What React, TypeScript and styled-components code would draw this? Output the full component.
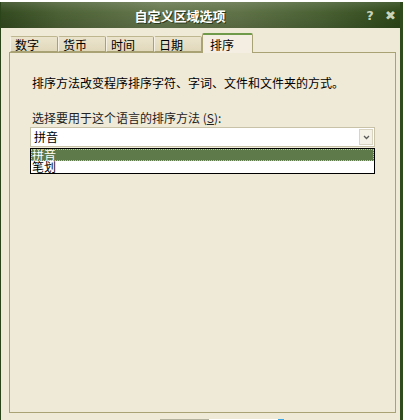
import React from "react"
import styled, { createGlobalStyle } from "styled-components"

const GlobalStyle = createGlobalStyle`
  html, body {
    margin: 0;
    padding: 0;
    background: #ffffff;
    overflow: hidden;
  }
  body {
    font-family: "Noto Sans CJK SC", "DejaVu Sans", sans-serif;
    font-size: 12px;
  }
`

const Window = styled.div`
  box-sizing: border-box;
  width: 403px;
  height: 418px;
  margin-top: 2px;
  overflow: hidden;
  background: #efe9d7;
  border-left: 1px solid #2c4419;
  border-right: 3px solid #2f4a1c;
  display: flex;
  flex-direction: column;
`

const TitleBar = styled.div`
  height: 26px;
  flex: none;
  display: flex;
  align-items: center;
  padding: 0 5px 0 0;
  background:
    linear-gradient(180deg, rgba(255, 255, 255, 0.12) 0%, rgba(255, 255, 255, 0) 40%, rgba(0, 0, 0, 0.1) 100%),
    linear-gradient(90deg, #33491f 0%, #4d6236 15%, #66784e 40%, #5f7247 60%, #4a6134 80%, #2e4719 100%);
`

const Title = styled.div`
  flex: 1;
  text-align: center;
  padding-right: 6px;
  color: #ffffff;
  font-weight: bold;
  font-size: 13px;
  text-shadow: 1px 1px 0 #2a3a1c;
`

const TitleButton = styled.span<{ $gap?: number }>`
  color: #c9d2bb;
  font-weight: bold;
  font-size: 13px;
  width: 10px;
  text-align: center;
  margin-left: ${(p) => p.$gap ?? 0}px;
  font-family: "DejaVu Sans", sans-serif;
`

const Body = styled.div`
  flex: 1;
  display: flex;
  flex-direction: column;
  padding: 5px 6px 0 8px;
`

const TabRow = styled.div`
  display: flex;
  align-items: flex-end;
  height: 19px;
  padding-left: 1px;
  position: relative;
  z-index: 1;
`

const Tab = styled.div<{ $active?: boolean }>`
  box-sizing: border-box;
  width: ${(p) => (p.$active ? 51 : 48)}px;
  height: ${(p) => (p.$active ? 20 : 16)}px;
  margin-bottom: ${(p) => (p.$active ? -1 : 0)}px;
  padding-left: ${(p) => (p.$active ? 7 : 4)}px;
  padding-top: 1px;
  display: flex;
  align-items: ${(p) => (p.$active ? "flex-start" : "center")};
  font-size: 12px;
  color: #000;
  border: 1px solid #a9a275;
  border-bottom: ${(p) => (p.$active ? "none" : "1px solid #a9a275")};
  border-top: ${(p) => (p.$active ? "2px solid #6f9a4a" : "1px solid #bdb68e")};
  border-left-color: ${(p) => (p.$active ? "#a9a275" : "#f5f1e4")};
  border-radius: 2px 2px 0 0;
  background: ${(p) =>
    p.$active ? "#f3eee1" : "linear-gradient(180deg, #ebe4cd 0%, #e1d8bb 100%)"};
`

const Panel = styled.div`
  box-sizing: border-box;
  flex: none;
  width: 387px;
  height: 361px;
  border: 1px solid #a9a275;
  padding: 23px 0 0 22px;
  display: flex;
  flex-direction: column;
`

const Description = styled.p`
  margin: 0;
  line-height: 14px;
  font-size: 12px;
`

const Label = styled.p`
  margin: 21px 0 0;
  line-height: 14px;
  font-size: 12px;
  color: #222;

  u {
    text-decoration: underline;
  }
`

const ComboWrap = styled.div`
  margin: 2px 0 0 -2px;
  width: 345px;
  display: flex;
  flex-direction: column;
`

const Combo = styled.div`
  box-sizing: border-box;
  height: 20px;
  background: #ffffff;
  border: 1px solid #c8c2a8;
  display: flex;
  align-items: center;
  padding-left: 3px;
`

const ComboValue = styled.span`
  flex: 1;
  font-size: 12px;
  line-height: 14px;
`

const DropButton = styled.div`
  box-sizing: border-box;
  width: 14px;
  height: 16px;
  margin-right: 1px;
  border: 1px solid #d9d4bf;
  background: #f4f1e6;
  display: flex;
  align-items: center;
  justify-content: center;
`

const ListBox = styled.div`
  box-sizing: border-box;
  height: 26px;
  margin-top: 1px;
  background: #ffffff;
  border: 1px solid #000000;
  display: flex;
  flex-direction: column;
`

const Option = styled.div<{ $selected?: boolean }>`
  box-sizing: border-box;
  height: 12px;
  line-height: 12px;
  padding-left: 1px;
  font-size: 12px;
  color: ${(p) => (p.$selected ? "#ffffff" : "#000000")};
  background: ${(p) => (p.$selected ? "#5e7a4a" : "transparent")};
  outline: ${(p) => (p.$selected ? "1px dotted #c0c8b0" : "none")};
  outline-offset: -1px;
  white-space: nowrap;
`

const Footer = styled.div`
  display: flex;
  padding: 6px 0 0 151px;
`

const FooterButton = styled.div<{ $edge: string; $w: number }>`
  width: ${(p) => p.$w}px;
  height: 22px;
  border-top: 1px solid ${(p) => p.$edge};
`

export default function App() {
  return (
    <>
      <GlobalStyle />
      <Window>
        <TitleBar>
          <Title>自定义区域选项</Title>
          <TitleButton>?</TitleButton>
          <TitleButton $gap={10}>✖</TitleButton>
        </TitleBar>
        <Body>
          <TabRow>
            <Tab>数字</Tab>
            <Tab>货币</Tab>
            <Tab>时间</Tab>
            <Tab>日期</Tab>
            <Tab $active>排序</Tab>
          </TabRow>
          <Panel>
            <Description>排序方法改变程序排序字符、字词、文件和文件夹的方式。</Description>
            <Label>
              选择要用于这个语言的排序方法 (<u>S</u>):
            </Label>
            <ComboWrap>
              <Combo>
                <ComboValue>拼音</ComboValue>
                <DropButton>
                  <svg width="7" height="5" viewBox="0 0 7 5">
                    <path d="M1 1 L3.5 3.5 L6 1" fill="none" stroke="#5a5a5a" strokeWidth="1.3" />
                  </svg>
                </DropButton>
              </Combo>
              <ListBox>
                <Option $selected>拼音</Option>
                <Option>笔划</Option>
              </ListBox>
            </ComboWrap>
          </Panel>
          <Footer>
            <FooterButton $edge="#b3b09c" $w={49} />
            <FooterButton $edge="#ffffff" $w={69} />
            <FooterButton $edge="#3aa6e6" $w={6} />
          </Footer>
        </Body>
      </Window>
    </>
  )
}
